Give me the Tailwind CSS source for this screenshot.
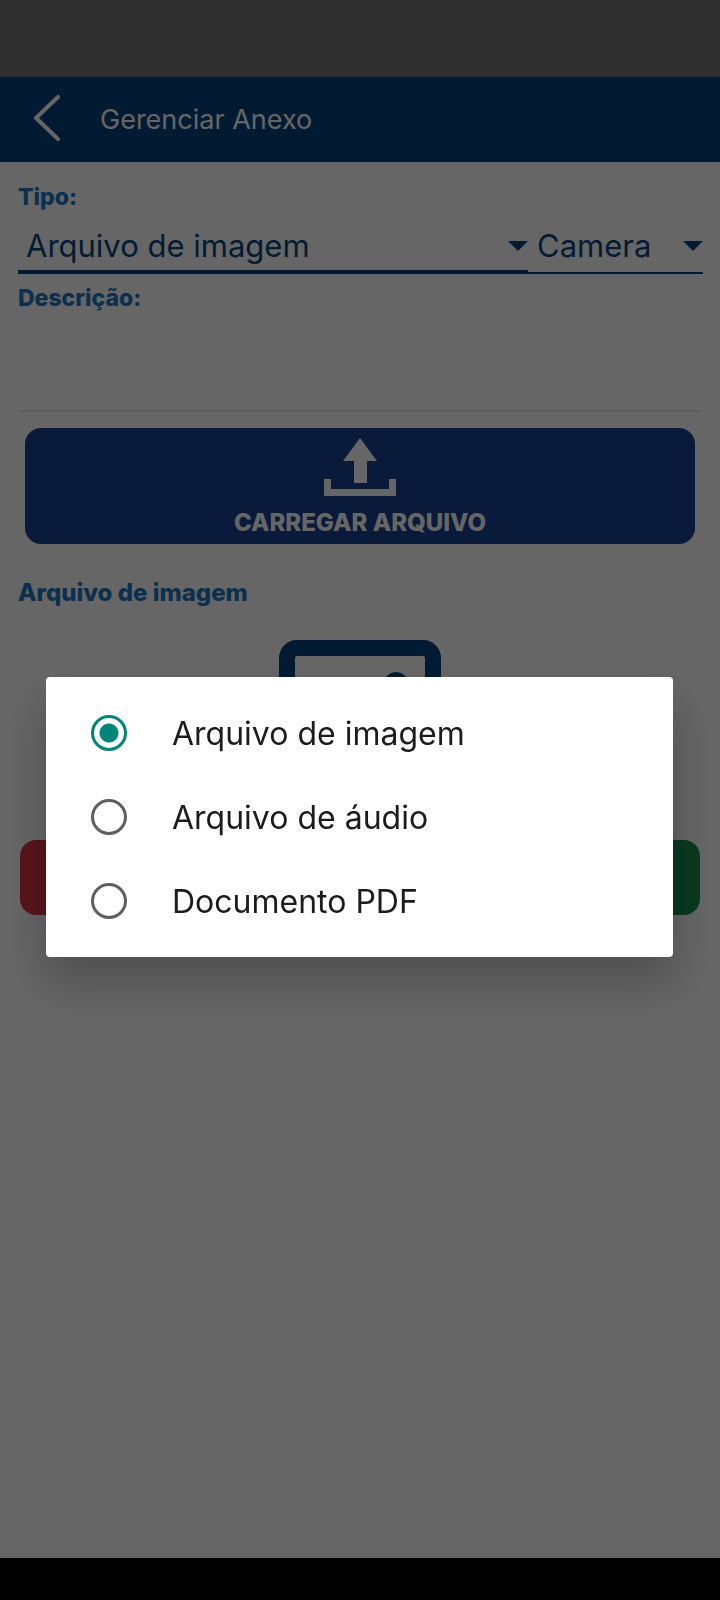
<!DOCTYPE html>
<html lang="pt-BR">
<head>
<meta charset="utf-8">
<meta name="viewport" content="width=device-width, initial-scale=1">
<title>Gerenciar Anexo</title>
<script src="https://cdn.jsdelivr.net/npm/@tailwindcss/browser@4"></script>
</head>
<body class="flex min-h-screen flex-col bg-white font-['Inter','Liberation_Sans',sans-serif] text-[#08467f]">

<!-- Status bar and title bar -->
<div class="h-[77px] bg-[#757575]"></div>
<header class="flex h-[85px] items-center bg-[#05437d] pl-[30px] text-white">
  <button type="button" aria-label="Voltar" class="mr-[35px] flex">
    <svg class="h-[50px] w-[35px]" viewBox="0 0 35 50" fill="none" stroke="currentColor" stroke-width="4" stroke-linecap="round" stroke-linejoin="round"><path d="M28 2 6 23 28 44"/></svg>
  </button>
  <h1 class="text-[27px] leading-8">Gerenciar Anexo</h1>
</header>

<main class="flex flex-1 flex-col px-[18px] pt-[19px]">
  <label for="tipo" class="text-[23px] leading-8 font-extrabold text-[#1c78c4]">Tipo:</label>
  <div class="mt-[3px] -mr-px flex h-[58px]">
    <div class="grid flex-1 items-center border-b-4 border-[#05437d] pt-1.5">
      <select id="tipo" class="col-start-1 row-start-1 appearance-none bg-transparent pl-2 text-[31px] leading-10">
        <option>Arquivo de imagem</option><option>Arquivo de áudio</option><option>Documento PDF</option>
      </select>
      <svg class="pointer-events-none col-start-1 row-start-1 h-[10px] w-[20px] justify-self-end" viewBox="0 0 20 10" fill="currentColor"><path d="M0 0H20L10 10Z"/></svg>
    </div>
    <div class="grid w-[175px] items-center border-b-2 border-[#05437d] pt-1">
      <select aria-label="Origem" class="col-start-1 row-start-1 appearance-none bg-transparent pl-[9px] text-[31px] leading-10">
        <option>Camera</option><option>Galeria</option>
      </select>
      <svg class="pointer-events-none col-start-1 row-start-1 h-[10px] w-[20px] justify-self-end" viewBox="0 0 20 10" fill="currentColor"><path d="M0 0H20L10 10Z"/></svg>
    </div>
  </div>
  <label for="descricao" class="mt-2 text-[23px] leading-8 font-extrabold text-[#1c78c4]">Descrição:</label>
  <textarea id="descricao" class="mx-0.5 h-[98px] resize-none border-b-2 border-[#e6e6e6] bg-transparent text-2xl"></textarea>

  <button type="button" class="mx-[7px] mt-4 flex h-[116px] flex-col items-center rounded-2xl bg-[#194191] pt-2.5 text-white">
    <svg class="h-[60px] w-[74px]" viewBox="0 0 74 60" fill="currentColor"><path d="M37 0 54 23H44V45H31V23H20Z"/><path d="M1 41H8V51H66V41H73V58H1Z"/></svg>
    <span class="mt-[9px] text-2xl font-extrabold">CARREGAR ARQUIVO</span>
  </button>

  <h2 class="mt-[33px] text-2xl font-extrabold text-[#1c78c4]">Arquivo de imagem</h2>
  <svg class="mt-[30px] h-[162px] w-[164px] self-center" viewBox="0 0 164 162" fill="none">
    <rect x="9" y="9" width="146" height="144" rx="10" stroke="#05437d" stroke-width="16"/>
    <circle cx="118" cy="45" r="12" fill="#05437d"/>
    <path d="M22 138 58 82 84 112 104 92 142 138Z" fill="#05437d"/>
  </svg>
  <div class="mx-0.5 mt-[39px] flex h-[75px] gap-4">
    <button type="button" aria-label="Cancelar" class="flex-1 rounded-2xl bg-[#dc3545]"></button>
    <button type="button" aria-label="Salvar" class="flex-1 rounded-2xl bg-[#148f4e]"></button>
  </div>
</main>
<div class="h-[42px] bg-black"></div>

<!-- Scrim with the file type dialog -->
<div class="fixed inset-0 flex items-center bg-black/60 pt-[77px] pr-[47px] pb-[43px] pl-[46px]">
  <div role="dialog" aria-modal="true" aria-label="Tipo" class="flex flex-1 flex-col rounded bg-white py-3.5 text-[32px] text-[#1c1c1c] shadow-[0_24px_48px_rgb(0_0_0/0.25)]">
    <label class="flex h-[84px] items-center gap-[45px] pl-[45px]">
      <input type="radio" name="opcao" checked class="size-[36px] appearance-none rounded-full border-[3px] border-[#5f5f5f] checked:border-[#008577] checked:bg-[radial-gradient(circle,#008577_9px,transparent_10px)]">
      <span class="pt-0.5">Arquivo de imagem</span>
    </label>
    <label class="flex h-[84px] items-center gap-[45px] pl-[45px]">
      <input type="radio" name="opcao" class="size-[36px] appearance-none rounded-full border-[3px] border-[#5f5f5f] checked:border-[#008577] checked:bg-[radial-gradient(circle,#008577_9px,transparent_10px)]">
      <span class="pt-0.5">Arquivo de áudio</span>
    </label>
    <label class="flex h-[84px] items-center gap-[45px] pl-[45px]">
      <input type="radio" name="opcao" class="size-[36px] appearance-none rounded-full border-[3px] border-[#5f5f5f] checked:border-[#008577] checked:bg-[radial-gradient(circle,#008577_9px,transparent_10px)]">
      <span class="pt-0.5">Documento PDF</span>
    </label>
  </div>
</div>
</body>
</html>
